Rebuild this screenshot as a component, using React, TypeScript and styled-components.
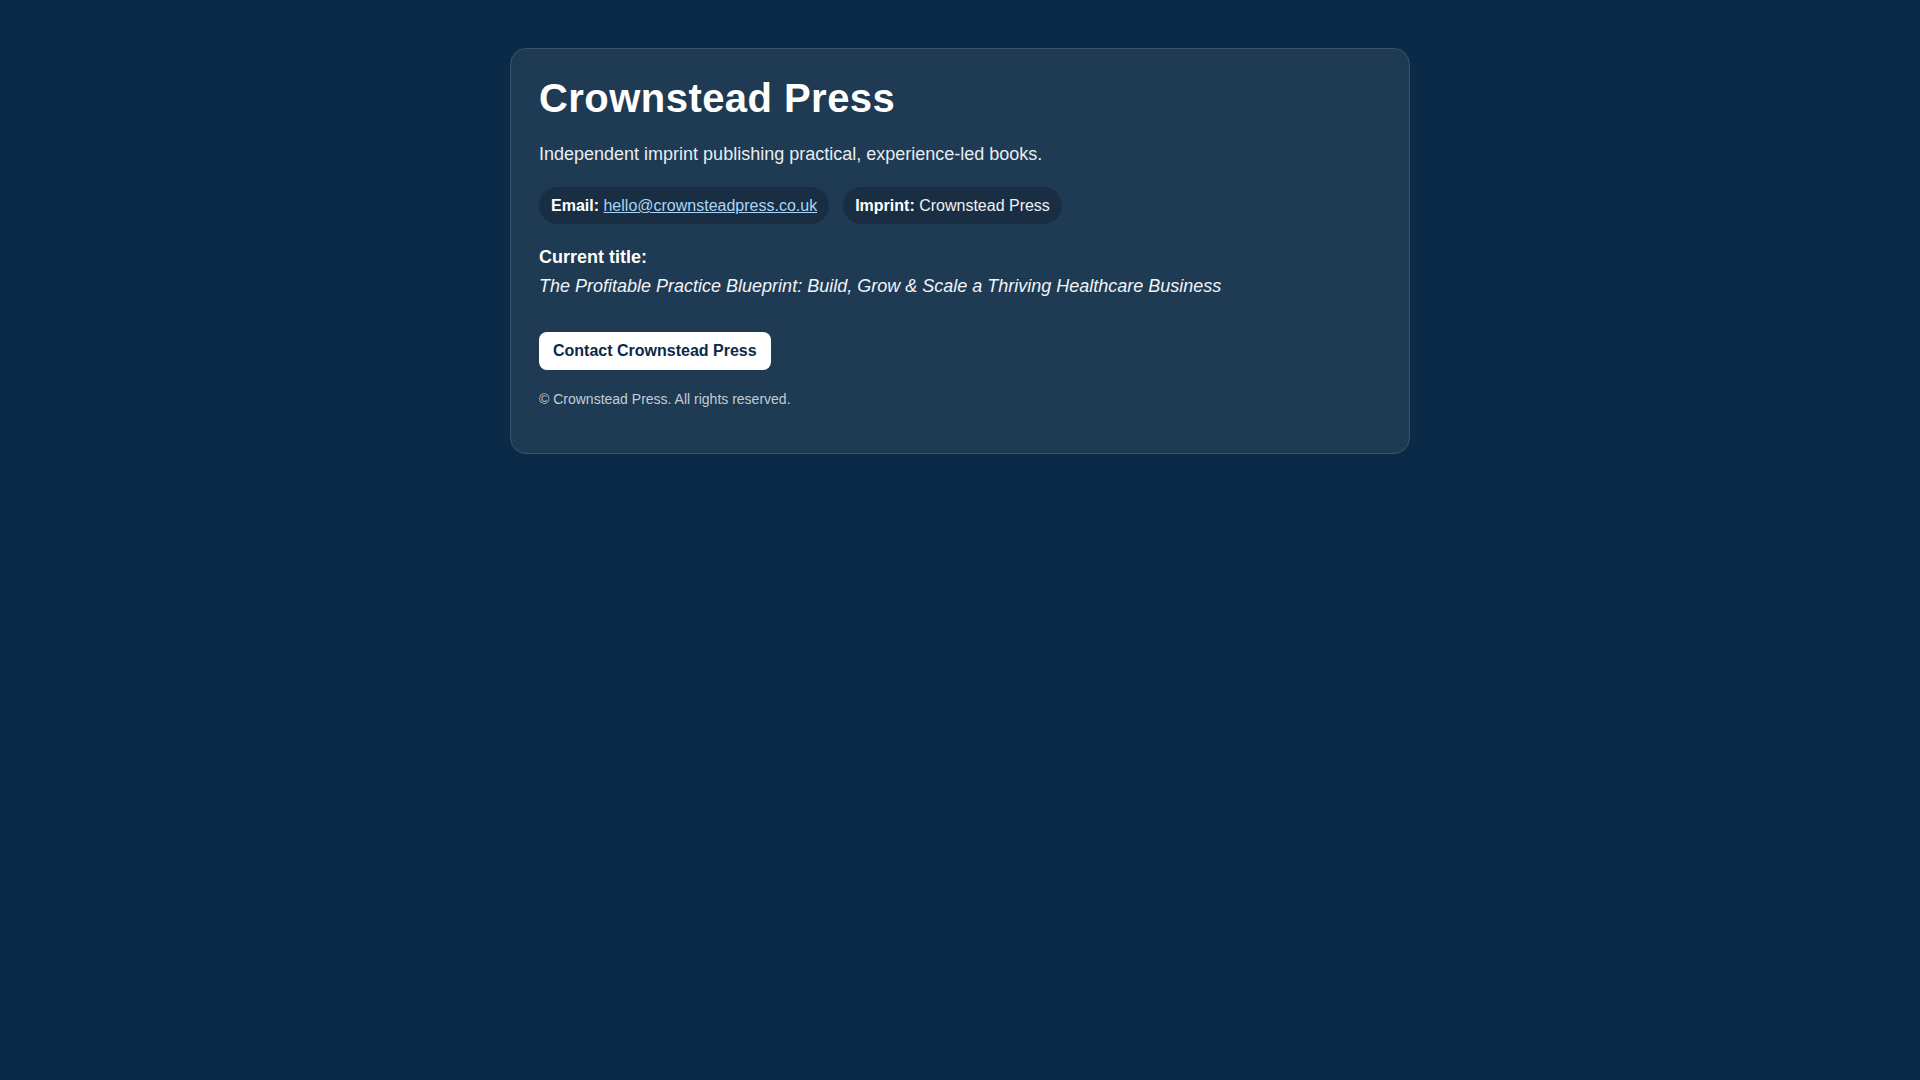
import React from 'react'
import styled, { createGlobalStyle } from 'styled-components'

const GlobalStyle = createGlobalStyle`
  html, body {
    margin: 0;
    padding: 0;
    background: #0b2a48;
    color: #f5f7fa;
    font-family: "Liberation Sans", Arial, Helvetica, sans-serif;
  }
`

const Page = styled.main`
  padding: 48px 16px;
`

const Card = styled.section`
  max-width: 900px;
  box-sizing: border-box;
  margin: 0 auto;
  padding: 26px 28px 24px 28px;
  background: #1f3a53;
  border: 1px solid #3a5369;
  border-radius: 16px;
`

const Title = styled.h1`
  margin: 0;
  font-size: 40px;
  line-height: 47px;
  font-weight: 700;
  letter-spacing: 0.45px;
  color: #ffffff;
`

const Tagline = styled.p`
  margin: 19px 0 0 0;
  font-size: 18px;
  line-height: 27px;
  color: #e8edf2;
`

const Pills = styled.div`
  display: flex;
  flex-wrap: wrap;
  gap: 14px;
  margin-top: 19px;
`

const Pill = styled.span`
  display: inline-block;
  padding: 8px 12px;
  font-size: 16px;
  line-height: 21px;
  background: #1a2e43;
  border-radius: 999px;
  color: #eef2f6;

  strong {
    color: #ffffff;
  }
`

const MailLink = styled.a`
  color: #a9d6f7;
  text-decoration: underline;
`

const Current = styled.p`
  margin: 19px 0 0 0;
  font-size: 18px;
  line-height: 29px;
  color: #f1f4f8;

  strong {
    color: #ffffff;
  }
`

const Actions = styled.div`
  margin-top: 31px;
`

const ContactButton = styled.a`
  display: inline-block;
  padding: 10px 14px;
  font-size: 16px;
  line-height: 18px;
  font-weight: 700;
  color: #0b2a48;
  background: #ffffff;
  border-radius: 8px;
  text-decoration: none;
`

const Footer = styled.p`
  margin: 19px 0 19px 0;
  font-size: 14px;
  line-height: 21px;
  color: #c3ccd6;
`

export default function App() {
  return (
    <>
      <GlobalStyle />
      <Page>
        <Card>
          <Title>Crownstead Press</Title>
          <Tagline>Independent imprint publishing practical, experience-led books.</Tagline>
          <Pills>
            <Pill>
              <strong>Email:</strong>{' '}
              <MailLink href="mailto:hello@crownsteadpress.co.uk">hello@crownsteadpress.co.uk</MailLink>
            </Pill>
            <Pill>
              <strong>Imprint:</strong> Crownstead Press
            </Pill>
          </Pills>
          <Current>
            <strong>Current title:</strong>
            <br />
            <em>The Profitable Practice Blueprint: Build, Grow &amp; Scale a Thriving Healthcare Business</em>
          </Current>
          <Actions>
            <ContactButton href="mailto:hello@crownsteadpress.co.uk">Contact Crownstead Press</ContactButton>
          </Actions>
          <Footer>© Crownstead Press. All rights reserved.</Footer>
        </Card>
      </Page>
    </>
  )
}
